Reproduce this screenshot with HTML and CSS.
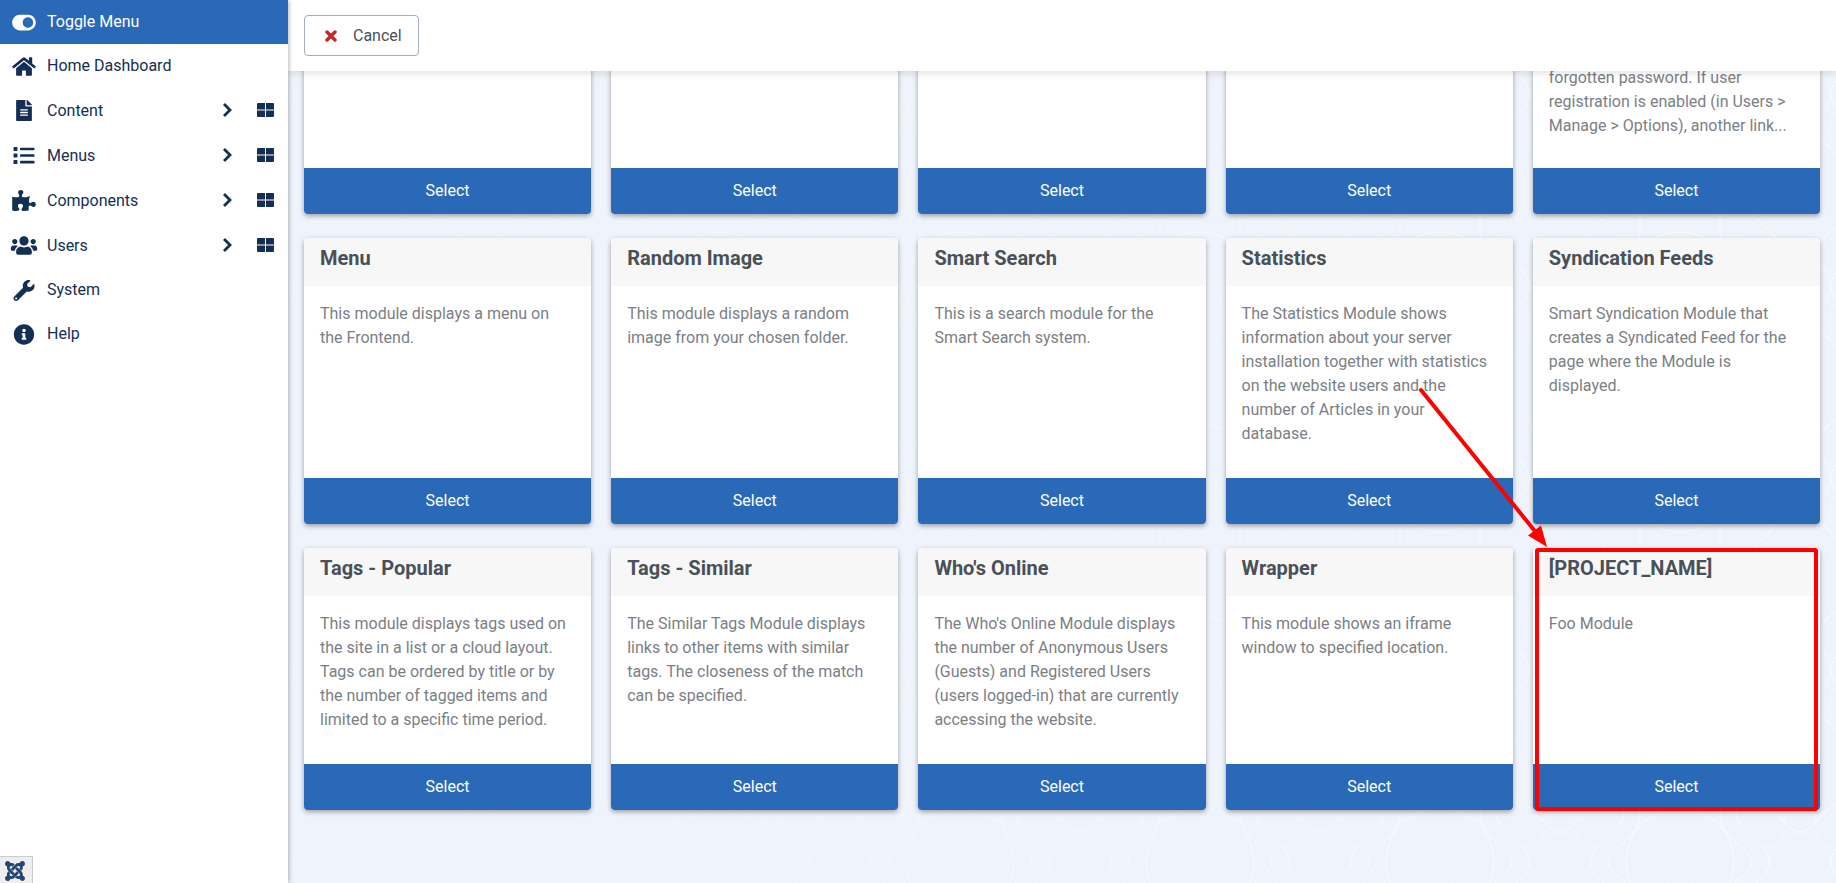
FILE: index.html
```html
<!DOCTYPE html>
<html lang="en">
<head>
<meta charset="utf-8">
<title>Select Module</title>
<link rel="stylesheet" href="styles.css">
</head>
<body>
<svg class="sprite" aria-hidden="true">
  <symbol id="chevron" viewBox="0 0 10 17"><path d="M2 2l6 6-6 6" fill="none" stroke="currentColor" stroke-width="2.8"/></symbol>
  <symbol id="grid" viewBox="0 0 17 14"><path d="M1 0h7v6H0V1a1 1 0 0 1 1-1zm8 0h7a1 1 0 0 1 1 1v5H9zM0 8h8v6H1a1 1 0 0 1-1-1zm9 0h8v5a1 1 0 0 1-1 1H9z"/><path d="M0 6h8v2H0zm9 0h8v2H9z" opacity=".5"/></symbol>
</svg>
<div class="app">
  <nav class="sidebar" aria-label="Main menu">
    <button class="toggle" type="button">
      <svg class="icon" viewBox="0 0 576 512"><path d="M384 64H192C86 64 0 150 0 256s86 192 192 192h192c106 0 192-86 192-192S490 64 384 64zm0 320c-70.800 0-128-57.300-128-128 0-70.800 57.300-128 128-128 70.800 0 128 57.300 128 128 0 70.800-57.300 128-128 128z"/></svg>
      <span>Toggle Menu</span>
    </button>
    <ul class="menu">
      <li class="item"><a class="link" href="#home">
        <svg class="icon" viewBox="0 0 576 512"><path d="M280.370 148.260L96 300.110V464a16 16 0 0 0 16 16l112.060-.29a16 16 0 0 0 15.920-16V368a16 16 0 0 1 16-16h64a16 16 0 0 1 16 16v95.640a16 16 0 0 0 16 16.050L464 480a16 16 0 0 0 16-16V300L295.670 148.260a12.190 12.190 0 0 0-15.300 0zM571.600 251.470L488 182.560V44.050a12 12 0 0 0-12-12h-56a12 12 0 0 0-12 12v72.610L318.470 43a48 48 0 0 0-61 0L4.340 251.470a12 12 0 0 0-1.600 16.900l25.500 31A12 12 0 0 0 45.150 301l235.220-193.740a12.190 12.190 0 0 1 15.300 0L530.900 301a12 12 0 0 0 16.900-1.600l25.500-31a12 12 0 0 0-1.700-16.930z"/></svg>
        <span>Home Dashboard</span></a></li>
      <li class="item item-wide"><a class="link" href="#content">
        <svg class="icon" viewBox="0 0 384 512"><path d="M224 136V0H24C10.700 0 0 10.700 0 24v464c0 13.300 10.700 24 24 24h336c13.300 0 24-10.700 24-24V160H248c-13.200 0-24-10.800-24-24zm64 236c0 6.600-5.400 12-12 12H108c-6.600 0-12-5.400-12-12v-8c0-6.600 5.400-12 12-12h168c6.600 0 12 5.400 12 12v8zm0-64c0 6.600-5.400 12-12 12H108c-6.600 0-12-5.400-12-12v-8c0-6.600 5.400-12 12-12h168c6.600 0 12 5.400 12 12v8zm0-72v8c0 6.600-5.400 12-12 12H108c-6.600 0-12-5.400-12-12v-8c0-6.600 5.400-12 12-12h168c6.600 0 12 5.400 12 12zm96-114.100v6.100H256V0h6.100c6.400 0 12.500 2.500 17 7l97.900 98c4.500 4.500 7 10.600 7 16.900z"/></svg>
        <span>Content</span><svg class="chevron"><use href="#chevron"/></svg></a>
        <a class="dash" href="#content-dashboard" aria-label="Content Dashboard"><svg class="grid-icon"><use href="#grid"/></svg></a></li>
      <li class="item item-wide"><a class="link" href="#menus">
        <svg class="icon" viewBox="0 0 512 512"><path d="M80 368H16a16 16 0 0 0-16 16v64a16 16 0 0 0 16 16h64a16 16 0 0 0 16-16v-64a16 16 0 0 0-16-16zm0-320H16A16 16 0 0 0 0 64v64a16 16 0 0 0 16 16h64a16 16 0 0 0 16-16V64a16 16 0 0 0-16-16zm0 160H16a16 16 0 0 0-16 16v64a16 16 0 0 0 16 16h64a16 16 0 0 0 16-16v-64a16 16 0 0 0-16-16zm416 176H176a16 16 0 0 0-16 16v32a16 16 0 0 0 16 16h320a16 16 0 0 0 16-16v-32a16 16 0 0 0-16-16zm0-320H176a16 16 0 0 0-16 16v32a16 16 0 0 0 16 16h320a16 16 0 0 0 16-16V80a16 16 0 0 0-16-16zm0 160H176a16 16 0 0 0-16 16v32a16 16 0 0 0 16 16h320a16 16 0 0 0 16-16v-32a16 16 0 0 0-16-16z"/></svg>
        <span>Menus</span><svg class="chevron"><use href="#chevron"/></svg></a>
        <a class="dash" href="#menus-dashboard" aria-label="Menus Dashboard"><svg class="grid-icon"><use href="#grid"/></svg></a></li>
      <li class="item item-wide"><a class="link" href="#components">
        <svg class="icon" viewBox="0 0 576 512"><path d="M519.442 288.651c-41.519 0-59.500 31.593-82.058 31.593C377.409 320.244 432 144 432 144s-196.288 80-196.288-3.297c0-35.827 36.288-46.250 36.288-85.985C272 19.216 243.885 0 210.539 0c-34.654 0-66.366 18.891-66.366 56.346 0 41.364 31.711 59.277 31.711 81.750C175.885 207.719 0 166.758 0 166.758v333.237s178.635 41.047 178.635-28.662c0-22.473-40-40.107-40-81.471 0-37.456 29.250-56.346 63.577-56.346 33.673 0 61.788 19.216 61.788 54.717 0 39.735-36.288 50.158-36.288 85.985 0 60.803 129.675 25.730 181.230 25.730 0 0-34.725-120.101 25.827-120.101 35.962 0 46.423 36.152 86.308 36.152C556.712 416 576 387.990 576 354.443c0-34.199-18.962-65.792-56.558-65.792z"/></svg>
        <span>Components</span><svg class="chevron"><use href="#chevron"/></svg></a>
        <a class="dash" href="#components-dashboard" aria-label="Components Dashboard"><svg class="grid-icon"><use href="#grid"/></svg></a></li>
      <li class="item item-wide"><a class="link" href="#users">
        <svg class="icon" viewBox="0 0 640 512"><path d="M96 224c35.300 0 64-28.700 64-64s-28.700-64-64-64-64 28.700-64 64 28.700 64 64 64zm448 0c35.300 0 64-28.700 64-64s-28.700-64-64-64-64 28.700-64 64 28.700 64 64 64zm32 32h-64c-17.600 0-33.500 7.100-45.100 18.600 40.300 22.100 68.900 62 75.100 109.400h66c17.700 0 32-14.300 32-32v-32c0-35.300-28.700-64-64-64zm-256 0c61.900 0 112-50.100 112-112S381.900 32 320 32 208 82.100 208 144s50.100 112 112 112zm76.800 32h-8.300c-20.800 10-43.900 16-68.500 16s-47.600-6-68.500-16h-8.300C179.600 288 128 339.600 128 403.200V432c0 26.500 21.500 48 48 48h288c26.500 0 48-21.500 48-48v-28.800c0-63.600-51.600-115.200-115.200-115.200zm-223.700-13.400C161.500 263.100 145.600 256 128 256H64c-35.300 0-64 28.700-64 64v32c0 17.700 14.300 32 32 32h65.900c6.300-47.400 34.900-87.300 75.200-109.400z"/></svg>
        <span>Users</span><svg class="chevron"><use href="#chevron"/></svg></a>
        <a class="dash" href="#users-dashboard" aria-label="Users Dashboard"><svg class="grid-icon"><use href="#grid"/></svg></a></li>
      <li class="item"><a class="link" href="#system">
        <svg class="icon" viewBox="0 0 512 512"><path d="M507.730 109.100c-2.240-9.030-13.540-12.090-20.120-5.510l-74.360 74.360-67.880-11.310-11.310-67.880 74.360-74.360c6.620-6.620 3.430-17.900-5.660-20.160-47.380-11.740-99.550.91-136.580 37.930-39.640 39.640-50.550 97.100-34.050 147.200L18.740 402.760c-24.990 24.990-24.990 65.510 0 90.500 24.990 24.990 65.510 24.990 90.500 0l213.210-213.210c50.120 16.710 107.470 5.680 147.370-34.220 37.070-37.070 49.700-89.320 37.910-136.730zM64 472c-13.250 0-24-10.750-24-24 0-13.260 10.750-24 24-24s24 10.740 24 24c0 13.250-10.750 24-24 24z"/></svg>
        <span>System</span></a></li>
      <li class="item"><a class="link" href="#help">
        <svg class="icon" viewBox="0 0 512 512"><path d="M256 8C119.043 8 8 119.083 8 256c0 136.997 111.043 248 248 248s248-111.003 248-248C504 119.083 392.957 8 256 8zm0 110c23.196 0 42 18.804 42 42s-18.804 42-42 42-42-18.804-42-42 18.804-42 42-42zm56 254c0 6.627-5.373 12-12 12h-88c-6.627 0-12-5.373-12-12v-24c0-6.627 5.373-12 12-12h12v-64h-12c-6.627 0-12-5.373-12-12v-24c0-6.627 5.373-12 12-12h64c6.627 0 12 5.373 12 12v100h12c6.627 0 12 5.373 12 12v24z"/></svg>
        <span>Help</span></a></li>
    </ul>
    <button class="debug" type="button" aria-label="Joomla">
      <svg class="joomla" viewBox="0 32 448 448"><path d="M.6 92.100C.6 58.800 27.400 32 60.400 32c30 0 54.500 21.900 59.200 50.200 32.600-7.600 67.100.6 96.500 30l-44.300 44.300c-20.500-20.500-42.600-16.300-55.400-3.500-14.300 14.300-14.300 37.900 0 52.200l99.500 99.500-44 44.300c-87.700-87.200-49.700-49.700-99.800-99.700-26.800-26.500-35-64.800-24.800-98.900C20.400 144.600.6 120.700.6 92.100zm129.500 116.400l44.300 44.300c10-10 89.700-89.700 99.700-99.800 14.300-14.300 37.600-14.300 51.900 0 12.800 12.800 17 35-3.500 55.400l44 44.300c31.200-31.200 38.500-67.600 28.900-101.200 29.200-4.100 51.900-29.200 51.900-59.500 0-33.200-26.800-60.100-59.800-60.100-30.300 0-55.400 22.500-59.500 51.600-33.800-9.900-71.700-1.500-98.300 25.100-18.300 19.100-71.100 71.500-99.600 99.900zm266.300 152.200c8.200-32.700-.9-68.500-26.300-93.900-11.800-12.200 5 4.700-99.500-99.700l-44.300 44.300 99.700 99.700c14.300 14.300 14.300 37.600 0 51.900-12.800 12.800-35 17-55.400-3.500l-44 44.300c27.600 30.200 68 38.800 102.700 28 5.500 27.400 29.700 48.100 58.900 48.100 33 0 59.800-26.800 59.800-60.100 0-30.200-22.500-55-51.600-59.100zm-84.300-53.100l-44-44.300c-87 86.400-50.400 50.400-99.700 99.800-14.300 14.300-37.600 14.300-51.900 0-13.100-13.400-16.900-35.300 3.200-55.400l-44-44.300c-30.200 30.200-38 65.200-29.500 98.300-26.700 6-46.200 29.900-46.200 58.200C0 453.200 26.800 480 59.800 480c28.600 0 52.500-19.800 58.600-46.700 32.700 8.200 68.500-.6 94.200-26 32.100-32 12.200-12.400 99.500-99.700z"/></svg>
    </button>
  </nav>
  <main class="main">
    <header class="toolbar">
      <button class="cancel" type="button">
        <svg class="cross" viewBox="0 0 12 12"><path d="M2 2l8 8M10 2l-8 8" fill="none" stroke="currentColor" stroke-width="3.400" stroke-linecap="round"/></svg>
        <span>Cancel</span>
      </button>
    </header>
    <div class="content">
      <svg class="backdrop" aria-hidden="true">
        <defs>
          <pattern id="tile" width="240" height="192" patternUnits="userSpaceOnUse" x="72" y="119">
            <g fill="none" stroke="#fff">
              <g stroke-width="1">
                <circle cx="120" cy="96" r="54"/>
                <path d="M160 0v45q0 15 8 23l20 20q8 8 0 16l-20 20q-8 8-8 23v45M80 0v45q0 15-8 23l-20 20q-8 8 0 16l20 20q8 8 8 23v45"/>
                <path d="M176 45q0 10 6 16l23 23q9 12 0 24l-23 23q-6 6-6 16M64 45q0 10-6 16l-23 23q-9 12 0 24l23 23q6 6 6 16"/>
                <path d="M0 66q6 0 12-6l40-40M240 66q-6 0-12-6l-40-40M0 126q6 0 12 6l40 40M240 126q-6 0-12 6l-40 40"/>
              </g>
              <g stroke-width="1" opacity=".5">
                <circle cx="120" cy="96" r="24"/>
                <circle cx="0" cy="96" r="30"/><circle cx="240" cy="96" r="30"/>
                <path d="M16 40v28q0 12 12 12h20M224 40v28q0 12-12 12h-20M120 30v44M30 150v-24q0-12 12-12h40M210 150v-24q0-12-12-12h-40"/>
              </g>
            </g>
          </pattern>
          <linearGradient id="fade"><stop offset="0" stop-color="#fff" stop-opacity=".12"/><stop offset="1" stop-color="#fff" stop-opacity=".8"/></linearGradient>
          <mask id="fade-mask"><rect width="100%" height="100%" fill="url(#fade)"/></mask>
        </defs>
        <rect width="100%" height="100%" fill="url(#tile)" mask="url(#fade-mask)"/>
      </svg>
      <div class="cards">
        <article class="card"><p class="text text-cut"></p><a class="select" href="#m1">Select</a></article>
        <article class="card"><p class="text text-cut"></p><a class="select" href="#m2">Select</a></article>
        <article class="card"><p class="text text-cut"></p><a class="select" href="#m3">Select</a></article>
        <article class="card"><p class="text text-cut"></p><a class="select" href="#m4">Select</a></article>
        <article class="card"><p class="text text-cut">forgotten password. If user registration is enabled (in Users &gt; Manage &gt; Options), another link...</p><a class="select" href="#m5">Select</a></article>

        <article class="card"><h2 class="title">Menu</h2><p class="text">This module displays a menu on the Frontend.</p><a class="select" href="#menu">Select</a></article>
        <article class="card"><h2 class="title">Random Image</h2><p class="text">This module displays a random image from your chosen folder.</p><a class="select" href="#random">Select</a></article>
        <article class="card"><h2 class="title">Smart Search</h2><p class="text">This is a search module for the Smart Search system.</p><a class="select" href="#search">Select</a></article>
        <article class="card"><h2 class="title">Statistics</h2><p class="text">The Statistics Module shows information about your server installation together with statistics on the website users and the number of Articles in your database.</p><a class="select" href="#stats">Select</a></article>
        <article class="card"><h2 class="title">Syndication Feeds</h2><p class="text">Smart Syndication Module that creates a Syndicated Feed for the page where the Module is displayed.</p><a class="select" href="#feeds">Select</a></article>

        <article class="card"><h2 class="title">Tags - Popular</h2><p class="text">This module displays tags used on the site in a list or a cloud layout. Tags can be ordered by title or by the number of tagged items and limited to a specific time period.</p><a class="select" href="#popular">Select</a></article>
        <article class="card"><h2 class="title">Tags - Similar</h2><p class="text">The Similar Tags Module displays links to other items with similar tags. The closeness of the match can be specified.</p><a class="select" href="#similar">Select</a></article>
        <article class="card"><h2 class="title">Who's Online</h2><p class="text">The Who's Online Module displays the number of Anonymous Users (Guests) and Registered Users (users logged-in) that are currently accessing the website.</p><a class="select" href="#online">Select</a></article>
        <article class="card"><h2 class="title">Wrapper</h2><p class="text">This module shows an iframe window to specified location.</p><a class="select" href="#wrapper">Select</a></article>
        <article class="card"><h2 class="title">[PROJECT_NAME]</h2><p class="text">Foo Module</p><a class="select" href="#project">Select</a>
          <div class="highlight"></div>
          <svg class="arrow" viewBox="0 0 135 167" aria-hidden="true"><path d="M6 6l117 145" fill="none" stroke="#f00" stroke-width="4" stroke-linecap="round"/><path d="M132 163l-19-11.500 13-10z" fill="#f00"/></svg>
        </article>
      </div>
    </div>
  </main>
</div>
</body>
</html>
```
FILE: styles.css
```css
* { box-sizing: border-box; }

body {
  margin: 0;
  font: 16px/24px Roboto, "Liberation Sans", sans-serif;
  color: #495057;
}

a { color: inherit; text-decoration: none; }
button { font: inherit; cursor: pointer; }
svg { fill: currentColor; flex: none; }

.sprite { position: absolute; width: 0; height: 0; }
.app { display: flex; height: 100vh; }

.sidebar {
  display: flex;
  flex-direction: column;
  flex: none;
  width: 288px;
  background: #fff;
  color: #132f53;
  box-shadow: 0 0 5px rgba(0, 0, 0, .4);
  z-index: 2;
}

.toggle, .link {
  display: flex;
  align-items: center;
  gap: 9px;
  height: 44px;
  padding: 0 10px;
}

.toggle {
  border: 0;
  background: #2a69b8;
  color: #fff;
}

.menu { margin: 0; padding: 0; list-style: none; }
.item { display: flex; align-items: center; height: 44px; }
.item-wide, .item-wide .link { height: 45px; }
.link { flex: 1; padding-right: 0; }
.icon { width: 28px; height: 21px; }
.chevron { width: 10px; height: 17px; margin-left: auto; }
.dash { display: flex; padding: 15px 14px 16px 25px; }
.grid-icon { width: 17px; height: 14px; }

.debug {
  display: flex;
  align-self: flex-start;
  margin-top: auto;
  padding: 4px 7px 2px 5px;
  border: solid #ccc;
  border-width: 1px 1px 0 0;
  background: #eee;
  color: #234673;
}
.joomla { width: 20px; height: 20px; }

.main { display: flex; flex-direction: column; flex: 1; min-width: 0; }

.toolbar {
  flex: none;
  padding: 15px 16px;
  background: #fff;
  box-shadow: 0 2px 8px rgba(0, 0, 0, .12);
  z-index: 1;
}

.cancel {
  display: flex;
  align-items: center;
  gap: 16px;
  height: 41px;
  padding: 0 16px 0 20px;
  border: 1px solid #a5afb9;
  border-radius: 4px;
  background: #fff;
  color: #495057;
}
.cross { width: 12px; height: 12px; color: #c52827; }

.content {
  position: relative;
  display: flex;
  flex: 1;
  flex-direction: column;
  justify-content: flex-end;
  min-height: 0;
  padding: 0 16px 73px;
  overflow: hidden;
  background: #eff3fb;
}

.backdrop { position: absolute; inset: 0; width: 100%; height: 100%; }

.cards {
  position: relative;
  display: grid;
  flex: none;
  grid-template-columns: repeat(5, minmax(0, 1fr));
  gap: 24px 20px;
}

.card {
  position: relative;
  display: flex;
  flex-direction: column;
  border-radius: 4px;
  background: #fff;
  box-shadow: 0 2px 5px rgba(0, 0, 0, .35);
}

.title {
  margin: 0;
  padding: 8px 16px 16px;
  border-radius: 4px 4px 0 0;
  background: #f7f7f7;
  font-size: 20px;
  line-height: 24px;
  font-weight: 700;
}

.text {
  flex: 1;
  margin: 0;
  padding: 16px 16px 32px;
  color: #7b8085;
}
.text-cut { padding-bottom: 30px; }

.select {
  padding: 11px 16px;
  border-radius: 0 0 4px 4px;
  background: #2a69b8;
  color: #fff;
  text-align: center;
}

.highlight {
  position: absolute;
  inset: 0 2px -1px;
  border: 4px solid #f00;
  border-radius: 3px;
}

.arrow {
  position: absolute;
  left: -118px;
  top: -164px;
  width: 135px;
  height: 167px;
}
```
